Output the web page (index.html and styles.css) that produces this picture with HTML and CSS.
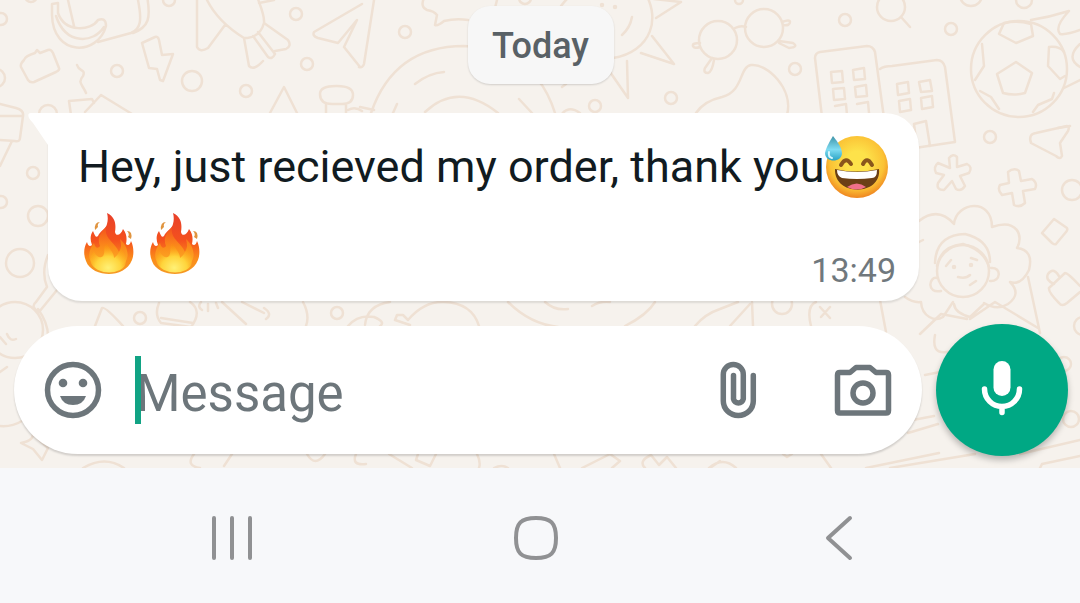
FILE: index.html
```html
<!DOCTYPE html>
<html lang="en">
<head>
<meta charset="utf-8">
<meta name="viewport" content="width=device-width, initial-scale=1">
<title>Chat</title>
<link rel="stylesheet" href="styles.css">
</head>
<body>
<svg class="defs" aria-hidden="true">
  <defs>
    <linearGradient id="flame" x1="0" y1="0" x2="0" y2="1">
      <stop offset="0" stop-color="#e8402a"/><stop offset=".45" stop-color="#f4511e"/><stop offset=".75" stop-color="#fb8c1a"/><stop offset="1" stop-color="#f59a25"/>
    </linearGradient>
    <linearGradient id="ember" x1="0" y1="0" x2="0" y2="1">
      <stop offset="0" stop-color="#f4511e"/><stop offset=".5" stop-color="#fb8c1a"/><stop offset="1" stop-color="#fdb52a"/>
    </linearGradient>
    <radialGradient id="glow" cx=".5" cy=".85" r=".8">
      <stop offset="0" stop-color="#fff176"/><stop offset=".45" stop-color="#ffd43b"/><stop offset="1" stop-color="#fb8c00" stop-opacity="0"/>
    </radialGradient>
    <radialGradient id="face" cx=".5" cy=".42" r=".58">
      <stop offset=".3" stop-color="#fde24a"/><stop offset=".75" stop-color="#fbc235"/><stop offset="1" stop-color="#ef8620"/>
    </radialGradient>
    <linearGradient id="drop" x1="0" y1="0" x2="0" y2="1">
      <stop offset="0" stop-color="#3f93a8"/><stop offset=".55" stop-color="#7fdcf2"/><stop offset="1" stop-color="#29a3c4"/>
    </linearGradient>
    <symbol id="fire" viewBox="0 0 66 66">
      <path fill="url(#flame)" d="M29 3C38 7 38 16 37 22C38 27 43 25 45 19C49 24 49 29 48 34C50 36 52 35 53 31C56 37 56 45 54 50C50 60 40 64 31 64C22 64 11 60 8 51C5 44 6 37 9 32C10 36 12 37 14 35C12 30 12 25 15 21C17 26 18 28 20 26C22 21 28 19 29 14C30 10 30 7 29 3Z"/>
      <path fill="url(#ember)" d="M28 17C26 29 36 31 41 42C44 38 43 33 42 29C48 34 52 44 48 51C44 59 17 60 12 50C10 44 12 38 16 33C17 38 20 39 22 36C19 29 22 23 28 17Z"/>
      <path fill="url(#glow)" d="M29 31C29 38 36 41 36 48C40 45 42 42 42 37C50 47 50 56 42 60Q31 65 20 60C9 54 12 46 16 41C17 46 22 49 25 46C28 42 24 37 29 31Z"/>
      <path fill="#e0943f" d="M22 12Q16 12 17 20L20 17Q19 14 22 12ZM49 21Q55 21 53 29L50 27Q52 24 49 21Z"/>
    </symbol>
  </defs>
</svg>
<div class="screen">
  <main class="chat">
    <svg class="wallpaper" viewBox="0 0 1080 468" preserveAspectRatio="xMidYMid slice" aria-hidden="true">
      <!-- loose dots -->
      <circle cx="1" cy="19" r="6"/><circle cx="-4" cy="78" r="9"/><circle cx="117" cy="71" r="6"/><circle cx="192" cy="81" r="10"/><circle cx="246" cy="91" r="6"/><circle cx="296" cy="14" r="6"/><circle cx="307" cy="64" r="6"/><circle cx="169" cy="0" r="6"/><circle cx="31" cy="-4" r="6"/><circle cx="48" cy="114" r="9"/>
      <circle cx="405" cy="32" r="6"/><circle cx="525" cy="-2" r="6"/><circle cx="595" cy="106" r="6"/><circle cx="671" cy="98" r="6"/><circle cx="739" cy="0" r="4"/><circle cx="795" cy="69" r="6"/><circle cx="845" cy="20" r="6"/><circle cx="951" cy="29" r="6"/><circle cx="971" cy="-5" r="11"/><circle cx="1024" cy="0" r="8"/>
      <circle cx="33" cy="173" r="6"/><circle cx="1" cy="202" r="6"/><circle cx="38" cy="216" r="10"/><circle cx="20" cy="263" r="14"/><circle cx="140" cy="318" r="6"/><circle cx="337" cy="313" r="6"/><circle cx="782" cy="304" r="10"/><circle cx="990" cy="137" r="6"/><circle cx="1072" cy="190" r="10"/><circle cx="1083" cy="326" r="9"/><circle cx="1064" cy="364" r="7"/><circle cx="1071" cy="419" r="8"/>
      <!-- banana and mug -->
      <path d="M52 4L58 3L58 13C65 33 91 31 98 20Q106 17 106 26C98 56 53 57 52 15ZM56 16C66 46 94 43 104 27M68 0L74 26M138 0C142 20 141 29 131 33L98 42M147 -4C151 18 149 27 133 33"/>
      <!-- camera, squiggle, bolt, envelope -->
      <path d="M24 60Q25 56 35 53L37 50L40 53L48 50Q51 49 53 53L59 68Q60 70 56 72L34 82Q30 83 28 80L21 67Q20 64 24 60ZM77 65C79 72 86 69 83 76C77 83 83 85 86 93M142 43L155 37Q158 36 159 40L162 55L173 54L163 81L160 80L157 69L149 68ZM71 115L69 101L92 99L94 103M85 112L101 95L132 114M0 104L16 108Q24 110 23 116L20 138Q20 142 15 141L0 140M0 116L23 116M12 141L0 166"/>
      <!-- rocket -->
      <path d="M197 0V47Q200 53 208 48L225 25M207 0Q218 22 244 38Q260 38 264 23C265 15 259 3 257 -4M259 3L274 0M244 38L249 66Q254 71 263 61M253 36L268 57Q272 60 275 54L258 32M264 23L288 40Q292 46 286 49L275 51"/>
      <!-- paper plane, lever, candy -->
      <path d="M362 4L314 32Q312 36 318 38L338 43L357 20L344 47L360 67M374 0L364 64Q363 68 359 67M270 113L284 87L297 113M337 86H336Q320 86 320 94Q320 104 332 104H342Q353 104 353 95Q353 86 337 86ZM326 104V113M346 104V113M348 110Q355 106 362 111"/>
      <path d="M424 -2Q420 7 427 10Q434 11 437 15L435 25Q438 26 444 21Q456 18 468 20M497 0L495 8M371 113Q394 46 464 46Q535 49 555 113M415 84Q429 73 444 72M425 112Q458 81 498 113M519 99L532 113M393 113L397 104M360 107L374 110"/>
      <!-- sun -->
      <path d="M561 6Q590 -32 640 -15C665 18 650 52 613 58M654 -1L681 2L656 18M652 36L674 64L641 53M627 61L628 98L610 72M622 35Q630 28 632 17"/>
      <circle cx="602" cy="5" r="1"/><circle cx="615" cy="7" r="1"/><path d="M562 87L566 84M580 113Q567 104 560 117"/>
      <!-- glasses and magnifier -->
      <circle cx="718" cy="40" r="19"/><circle cx="764" cy="28" r="19"/><path d="M735 28Q741 25 746 27M782 22Q790 19 790 22Q790 26 783 25M779 41L793 43Q799 47 789 48L779 43M700 43Q692 43 693 46Q694 49 700 47M712 58L705 68Q703 73 708 73Q712 72 714 60"/>
      <circle cx="891" cy="7" r="14"/><path d="M901 17L910 27"/>
      <!-- pear shape -->
      <path d="M696 113Q704 101 722 97C744 91 739 67 751 65C767 63 794 89 787 115"/>
      <!-- buildings -->
      <path d="M822 117L815 58Q815 53 820 52L867 46Q873 46 875 52L884 118M880 69Q884 66 892 66L937 60Q943 60 945 67L955 142L908 149M831 72L842 71L843 82L832 83ZM853 70L864 68L865 79L854 80ZM833 89L844 88L845 99L834 100ZM855 87L866 85L867 96L856 97ZM835 106L846 104L847 115M857 104L868 102L869 113M897 84L908 82L909 93L898 95ZM919 82L930 80L932 91L921 92ZM899 101L910 99L911 110L900 112ZM921 98L932 96L933 107L922 109ZM914 124L926 121L930 146M914 124L916 140"/>
      <!-- football -->
      <circle cx="1019" cy="69" r="48"/>
      <path d="M1016 62L1032 73L1025 93Q1014 96 1003 93L997 74ZM1004 23Q1017 20 1031 24L1033 36L1016 43L999 34ZM1049 47Q1060 46 1064 52M1049 47L1048 66L1060 79L1065 76M982 44L984 66L975 80M980 91L991 97L999 109M1054 93L1052 99L1038 105L1033 112M1031 20Q1050 17 1069 11Q1054 27 1060 34Q1067 35 1080 30M1064 88L1080 80M1080 44Q1065 58 1080 67M1070 126L1058 128"/>
      <path d="M1031 143Q1028 134 1036 133L1067 126Q1070 126 1068 131L1060 143L1062 156Q1060 160 1056 156Z"/>
      <!-- asterisk, plus, tiles -->
      <path d="M950 168L949 158Q953 153 957 157L957 167L967 164Q973 167 969 173L960 176L965 186Q961 192 956 189L952 181L944 190Q936 190 938 183L944 175L936 173Q933 167 938 163Z"/>
      <path d="M1009 183L1008 172Q1014 167 1019 171L1021 181L1032 179Q1038 183 1035 189L1023 191L1025 203Q1020 208 1014 205L1012 193L1002 195Q997 190 1000 185Z"/>
      <path d="M1054 219L1067 228Q1068 230 1066 232L1056 244Q1055 245 1052 243L1042 233ZM1054 284Q1045 280 1048 274Q1054 266 1060 278M1049 288L1065 273Q1068 273 1080 286M1049 288Q1048 292 1059 303Q1062 307 1067 303L1080 292"/>
      <!-- curly-haired person -->
      <path d="M919 221Q938 206 954 224C956 202 992 197 992 227C1017 218 1024 236 1017 248Q1034 250 1029 270Q1021 286 1010 282Q1022 294 1008 304Q997 311 984 303M919 242L923 240M905 297Q913 303 921 302C922 317 935 322 943 317L953 302"/>
      <circle cx="963" cy="271" r="26"/><path d="M935 263Q936 235 965 234Q990 240 990 262M937 266Q941 246 963 244Q984 250 989 267M991 268C1002 267 1001 282 990 281M937 278C929 276 926 294 941 291M946 266L951 260M971 258L977 260M958 277Q966 279 970 275M970 285L976 281M954 304Q955 313 970 317L984 304M970 319L995 302L1038 328M920 334L941 314L967 319M1028 277L1040 333M988 332Q928 371 935 335M880 300L886 332"/>
      <circle cx="954" cy="267" r="1"/><circle cx="971" cy="265" r="1"/>
      <!-- strip between bubble and message field -->
      <circle cx="15" cy="330" r="28"/><path d="M48 255Q41 272 47 287L36 302Q30 307 39 312L57 290M38 309Q48 323 48 336M0 337L6 344M7 334Q10 342 16 339M0 372L7 367M0 426Q12 427 22 421M95 326L102 308Q105 306 123 326M159 303Q154 315 161 323L191 327Q203 311 190 302M161 318L193 323M201 302Q197 307 202 310M208 304L208 311M216 303L218 308M222 302L246 324M242 302L264 313M264 308Q273 314 266 319M303 302Q310 315 306 326M348 326Q358 314 374 317Q386 322 380 326M365 325Q367 305 390 302M410 325L395 320L397 315L403 315L408 320Q424 301 444 302Q472 303 479 326M508 302Q530 324 558 327M545 302Q555 311 568 309M592 306Q600 301 610 302M625 326Q647 315 655 302M695 326Q705 314 720 309L738 302M730 326L750 304M752 302L753 326M811 326Q806 306 816 302M820 307L830 318M830 307L821 317"/>
      <path d="M913 420L934 416M925 375L940 372M908 433L938 424M866 468L939 453M890 468L975 454M1040 468L1042 464L1080 456M1020 454L1080 440"/>
      <path d="M21 443Q33 441 33 434L48 448L42 460L33 449ZM83 468Q105 455 124 468M194 454Q185 466 200 468M232 454L224 466M307 454Q315 468 325 454M356 454Q351 466 366 464M389 454L412 468M418 454L416 460L430 466L436 454M477 454Q481 462 479 468M494 468Q502 464 508 468M554 454L560 468M582 468L610 454L620 461L612 468M645 468Q638 461 651 455L659 465L667 457L676 468M710 468L720 461M709 468Q723 456 736 468M783 454L787 457L792 454M821 454L831 468"/>
    </svg>

    <div class="date">Today</div>

    <article class="bubble">
      <svg class="tail" viewBox="0 0 21 34" aria-hidden="true"><path d="M21 0H3Q-1 0 1 5Q2 7 5 10L20 32H21Z"/></svg>
      <p class="text">Hey, just recieved my order, thank you<svg class="emoji" viewBox="0 0 66 66" role="img" aria-label="Grinning face with sweat">
        <circle cx="33" cy="33" r="31" fill="url(#face)"/>
        <path d="M11 35Q32 40 55 35C58 62 10 63 11 35Z" fill="#6b3f16"/>
        <path d="M13 36Q33 40 53 36Q53 44 48 44Q33 46 18 44Q13 42 13 36Z" fill="#fff"/>
        <path d="M23 53Q33 46 42 53Q33 58 23 53Z" fill="#f0708a"/>
        <path d="M17 31Q22 22 27 30M39 30Q43 22 48 31" fill="none" stroke="#8a561c" stroke-width="4" stroke-linecap="round"/>
        <path d="M9 2Q18 13 18 19C18 29 1 29 1 19Q2 13 9 2Z" fill="url(#drop)"/>
        <path d="M5 18Q4 23 8 24" fill="none" stroke="#d8f8ff" stroke-width="2" stroke-linecap="round"/>
      </svg><wbr><svg class="emoji" role="img" aria-label="Fire"><use href="#fire"/></svg><svg class="emoji" role="img" aria-label="Fire"><use href="#fire"/></svg></p>
      <time class="time" datetime="13:49">13:49</time>
    </article>

    <form class="compose">
      <div class="field">
        <button class="icon" type="button" aria-label="Emoji">
          <svg viewBox="0 0 58 58"><circle class="line" cx="29" cy="29" r="25.500"/><circle cx="19" cy="22" r="4.300"/><circle cx="39" cy="22" r="4.300"/><path d="M16 35H42Q39 44 29 44Q19 44 16 35Z"/></svg>
        </button>
        <div class="entry">
          <input class="input" type="text" placeholder="Message" aria-label="Message">
          <span class="caret"></span>
        </div>
        <button class="icon clip" type="button" aria-label="Attach">
          <svg viewBox="0 0 58 58"><path class="line" d="M44.300 14.500V40A15 14.500 0 0 1 14.300 40V13.500A10 10 0 0 1 34.300 13.500V38A5 5 0 0 1 24.500 38V14.500"/></svg>
        </button>
        <button class="icon" type="button" aria-label="Camera">
          <svg viewBox="0 0 58 58"><path class="line" d="M6 11.500H16L22 6.500H36L42 11.500H52Q54.500 11.500 54.500 14V49.500Q54.500 52 52 52H6Q3.500 52 3.500 49.500V14Q3.500 11.500 6 11.500Z"/><circle class="line" cx="29" cy="32" r="10"/></svg>
        </button>
      </div>
      <button class="mic" type="button" aria-label="Record voice message">
        <svg viewBox="0 0 58 58"><rect x="20.500" y="0" width="17" height="35" rx="8.500"/><path class="line" d="M11.500 28A17.500 17.500 0 0 0 46.500 28M29 46V51.500"/></svg>
      </button>
    </form>
  </main>

  <nav class="nav" aria-label="System">
    <button class="key" type="button" aria-label="Recent apps"><svg viewBox="0 0 48 48"><path d="M6 4V44M24 4V44M42 4V44"/></svg></button>
    <button class="key" type="button" aria-label="Home"><svg viewBox="0 0 48 48"><path d="M24 4C39 4 44 9 44 24S39 44 24 44S4 39 4 24S9 4 24 4Z"/></svg></button>
    <button class="key" type="button" aria-label="Back"><svg viewBox="0 0 48 48"><path d="M34 4L12 24L34 44"/></svg></button>
  </nav>
</div>
</body>
</html>
```
FILE: styles.css
```css
* { box-sizing: border-box; }

body {
  margin: 0;
  font-family: Roboto, "Liberation Sans", sans-serif;
  background: #f7f8fa;
}

button {
  padding: 0;
  border: 0;
  background: none;
}

.defs {
  position: absolute;
  width: 0;
  height: 0;
}

.screen {
  display: flex;
  flex-direction: column;
  min-height: 100vh;
}

.chat {
  position: relative;
  display: flex;
  flex-direction: column;
  padding: 6px 12px 12px 14px;
  overflow: hidden;
  background: #f6f2ed;
}

.wallpaper {
  position: absolute;
  inset: 0;
  width: 100%;
  height: 100%;
  fill: none;
  stroke: #efe1d4;
  stroke-width: 2.5;
  stroke-linecap: round;
  stroke-linejoin: round;
}

.date {
  position: relative;
  align-self: center;
  padding: 2px 25px 0 24px;
  border-radius: 22px;
  background: #f7f7f7;
  box-shadow: 0 1px 2px rgba(0, 0, 0, 0.15);
  color: #596166;
  font-size: 36px;
  font-weight: 500;
  line-height: 76px;
}

.bubble {
  position: relative;
  display: grid;
  margin: 29px 149px 23px 34px;
  padding: 16px 23px 20px 30px;
  border-radius: 0 34px 34px 34px;
  background: #fff;
  box-shadow: 0 2px 2px rgba(0, 0, 0, 0.1);
}

.tail {
  position: absolute;
  top: 0;
  left: -20px;
  width: 21px;
  height: 34px;
  fill: #fff;
}

.text {
  grid-area: 1 / 1;
  margin: 0;
  color: #111b21;
  font-size: 45px;
  line-height: 76px;
}

.emoji {
  width: 66px;
  height: 66px;
  vertical-align: -18px;
}

.time {
  grid-area: 1 / 1;
  align-self: end;
  justify-self: end;
  color: #70787d;
  font-size: 34px;
  line-height: 22px;
}

.compose {
  position: relative;
  display: flex;
  align-items: center;
  gap: 14px;
}

.field {
  display: flex;
  flex: 1;
  align-items: center;
  min-width: 0;
  height: 128px;
  padding: 0 30px;
  border-radius: 64px;
  background: #fff;
  box-shadow: 0 2px 2px rgba(0, 0, 0, 0.15);
}

.icon svg,
.mic svg {
  display: block;
  width: 58px;
  height: 58px;
}

.icon svg { fill: #6d767b; }

.mic svg { fill: #fff; }

.line {
  fill: none;
  stroke: #6d767b;
  stroke-width: 5.5;
  stroke-linecap: round;
  stroke-linejoin: round;
}

.clip { margin-right: 67px; }

.entry {
  position: relative;
  flex: 1;
  min-width: 0;
  margin-left: 33px;
}

.input {
  display: block;
  width: 100%;
  height: 68px;
  padding: 6px 0 0 1px;
  border: 0;
  outline: 0;
  background: none;
  color: #111b21;
  font-family: inherit;
  font-size: 51px;
}

.input::placeholder {
  color: #6d767b;
  opacity: 1;
}

.caret {
  position: absolute;
  top: 0;
  left: 0;
  width: 6px;
  height: 68px;
  background: #11a384;
}

.mic {
  display: grid;
  place-items: center;
  width: 132px;
  height: 132px;
  border-radius: 50%;
  background: #00a884;
  box-shadow: 0 4px 6px rgba(0, 0, 0, 0.25);
}

.mic .line { stroke: #fff; }

.nav {
  display: grid;
  flex: 1;
  grid-template-columns: repeat(3, 1fr);
  align-items: center;
  justify-items: center;
  min-height: 135px;
  padding: 5px 88px 0 80px;
  background: #f7f8fa;
}

.key svg {
  display: block;
  width: 48px;
  height: 48px;
  fill: none;
  stroke: #909193;
  stroke-width: 4;
  stroke-linecap: round;
  stroke-linejoin: round;
}
```
